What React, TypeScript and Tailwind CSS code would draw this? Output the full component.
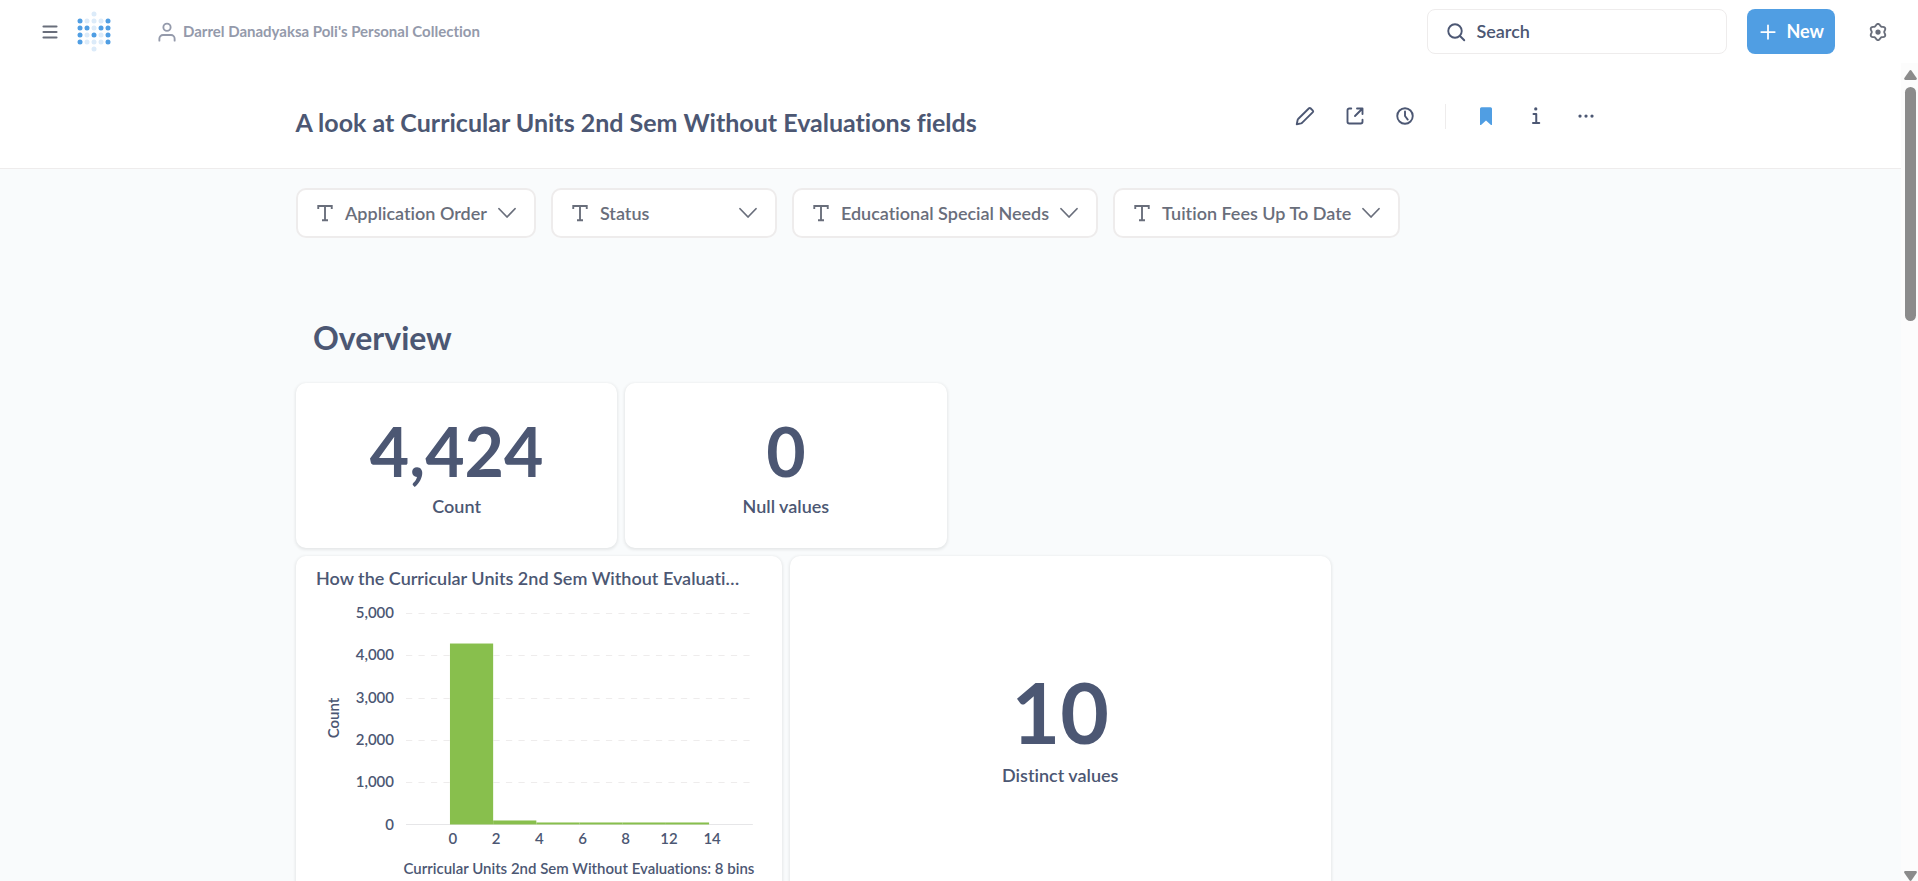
import type { ReactNode } from "react";

type IconProps = { className?: string; children: ReactNode };

function Icon({ className = "size-5", children }: IconProps) {
  return (
    <svg
      viewBox="0 0 16 16"
      fill="none"
      stroke="currentColor"
      strokeWidth="1.5"
      strokeLinecap="round"
      strokeLinejoin="round"
      aria-hidden="true"
      className={`shrink-0 ${className}`}
    >
      {children}
    </svg>
  );
}

const LOGO_ROWS = ["..o..", "#ooo#", "##o##", "#o#o#", "#ooo#", "..o.."];

function Logo() {
  return (
    <svg viewBox="0 0 34 42" aria-hidden="true" className="h-[42px] w-[34px]">
      {LOGO_ROWS.flatMap((row, y) =>
        row.split("").map((dot, x) =>
          dot === "." ? null : (
            <circle
              key={`${x}-${y}`}
              cx={3 + x * 7}
              cy={3 + y * 7}
              r="2.5"
              fill={dot === "#" ? "#509ee3" : "#dcebf9"}
            />
          ),
        ),
      )}
    </svg>
  );
}

// Six-lobed outline, with lobes at the top and the bottom.
const GEAR_POINTS = Array.from({ length: 72 }, (_, i) => {
  const angle = (i / 72) * 2 * Math.PI;
  const radius = 5.75 + 0.75 * Math.cos(6 * angle);
  return `${(8 + radius * Math.sin(angle)).toFixed(2)},${(8 - radius * Math.cos(angle)).toFixed(2)}`;
}).join(" ");

function TopBar() {
  return (
    <header className="flex h-[63px] shrink-0 items-center bg-white pr-[30px] pl-10">
      <button type="button" aria-label="Toggle sidebar" className="text-[#696e7b]">
        <Icon>
          <path d="M2.8 3.6h10.4M2.8 8h10.4M2.8 12.4h10.4" strokeWidth="1.7" />
        </Icon>
      </button>
      <a href="#home" aria-label="Home" className="ml-[17px]">
        <Logo />
      </a>
      <a
        href="#collection"
        className="ml-[46px] flex items-center gap-[6px] text-[15px] font-bold text-[#949aab]"
      >
        <Icon>
          <circle cx="8" cy="4.2" r="2.9" />
          <path d="M1.9 14.9v-1.6a2.9 2.9 0 0 1 2.9-2.9h6.4a2.9 2.9 0 0 1 2.9 2.9v1.6" />
        </Icon>
        Darrel Danadyaksa Poli's Personal Collection
      </a>
      <label className="ml-auto flex h-[45px] w-[300px] items-center gap-[10px] rounded-[8px] border border-[#eeecec] px-[18px] text-[#4c5773]">
        <Icon>
          <circle cx="7.2" cy="7.2" r="5.4" />
          <path d="m11.2 11.2 3.4 3.4" />
        </Icon>
        <input
          type="search"
          aria-label="Search"
          placeholder="Search"
          className="min-w-0 flex-1 bg-transparent text-[18px] font-semibold outline-none placeholder:text-[#4c5773]"
        />
      </label>
      <button
        type="button"
        className="ml-5 flex h-[45px] items-center gap-2 rounded-[8px] bg-[#509ee3] px-[11px] text-[18px] font-bold text-white"
      >
        <Icon>
          <path d="M8 2.6v10.8M2.6 8h10.8" strokeWidth="1.4" />
        </Icon>
        New
      </button>
      <button type="button" aria-label="Settings" className="ml-[33px] text-[#696e7b]">
        <Icon>
          <polygon points={GEAR_POINTS} />
          <circle cx="8" cy="8" r="2.1" fill="currentColor" stroke="none" />
        </Icon>
      </button>
    </header>
  );
}

function ActionButton({ label, children }: { label: string; children: ReactNode }) {
  return (
    <button type="button" aria-label={label} className="flex size-10 items-center justify-center">
      <Icon>{children}</Icon>
    </button>
  );
}

function TitleBar() {
  return (
    <div className="border-b border-[#eeecec] bg-white">
      <div className="mx-auto flex h-[105px] max-w-[1310px] items-start justify-between text-[#4c5773]">
        <h1 className="pt-11 text-[25px] leading-[30px] font-bold">
          A look at Curricular Units 2nd Sem Without Evaluations fields
        </h1>
        <div className="flex items-center gap-[10px] pt-[33px]">
          <ActionButton label="Edit dashboard">
            <path d="M1.4 14.6l.7-3.4a2 2 0 0 1 .6-1L11.2 1.8a.9.9 0 0 1 1.2 0l1.9 1.9a.9.9 0 0 1 0 1.2L5.8 13.3a2 2 0 0 1-1 .6Z" />
          </ActionButton>
          <ActionButton label="Sharing">
            <path d="M5 2H3.4A1.4 1.4 0 0 0 2 3.4v9.2A1.4 1.4 0 0 0 3.4 14h9.2a1.4 1.4 0 0 0 1.4-1.4V11M8 8l5.6-5.6M9.6 2H14v4.4" />
          </ActionButton>
          <ActionButton label="History">
            <circle cx="8" cy="8" r="6.2" />
            <path d="M8 4.4V8l2.2 2.9" />
          </ActionButton>
          <div className="mx-[10px] h-[25px] w-px bg-[#eeecec]" />
          <button
            type="button"
            aria-label="Remove bookmark"
            className="flex size-10 items-center justify-center text-[#509ee3]"
          >
            <Icon>
              <path
                d="M3.2 2.2a1.2 1.2 0 0 1 1.2-1.2h7.2a1.2 1.2 0 0 1 1.2 1.2v12.6c0 .5-.5.6-.8.3L8 11.600l-4 3.500c-.3.3-.8.2-.8-.3Z"
                fill="currentColor"
                stroke="none"
              />
            </Icon>
          </button>
          <ActionButton label="More info">
            <circle cx="7.8" cy="2.3" r="1.3" fill="currentColor" stroke="none" />
            <path d="M6 6.3h2.2v7.2M5.6 13.5h5" strokeWidth="1.6" />
          </ActionButton>
          <ActionButton label="Dashboard menu">
            <g fill="currentColor" stroke="none">
              <circle cx="3.2" cy="8" r="1.3" />
              <circle cx="8" cy="8" r="1.3" />
              <circle cx="12.8" cy="8" r="1.3" />
            </g>
          </ActionButton>
        </div>
      </div>
    </div>
  );
}

const FILTERS = ["Application Order", "Status", "Educational Special Needs", "Tuition Fees Up To Date"];

function Filters() {
  return (
    <div className="flex flex-wrap gap-[15px]">
      {FILTERS.map((name) => (
        <button
          key={name}
          type="button"
          className="flex h-[50px] min-w-[226px] items-center rounded-[10px] border-2 border-[#eeecec] bg-white px-[17px] text-[18px] font-semibold text-[#696e7b]"
        >
          <Icon>
            <path
              d="M2.6 4.8V2.4h10.8v2.4M8 2.4v11.4M5.6 13.8h4.8"
              strokeLinecap="butt"
              strokeLinejoin="miter"
            />
          </Icon>
          <span className="mx-[10px]">{name}</span>
          <Icon className="ml-auto size-5">
            <path d="m1.6 4.6 6.4 6.6 6.4-6.6" strokeWidth="1.4" />
          </Icon>
        </button>
      ))}
    </div>
  );
}

const CARD = "rounded-[10px] bg-white shadow-[0_1px_3px_1px_rgba(0,0,0,0.08)]";

function Scalar({ value, label, large = false }: { value: string; label: string; large?: boolean }) {
  return (
    <div className="flex h-full flex-col items-center justify-center gap-[9px] pt-1">
      <div className={large ? "text-[84px] leading-none font-bold" : "text-[68px] leading-none font-bold"}>
        {value}
      </div>
      <h3 className="text-[18px] leading-6 font-semibold">{label}</h3>
    </div>
  );
}

const Y_TICKS = [
  { label: "5,000", y: 23 },
  { label: "4,000", y: 65 },
  { label: "3,000", y: 108 },
  { label: "2,000", y: 150 },
  { label: "1,000", y: 192 },
];
const X_TICKS = ["0", "2", "4", "6", "8", "12", "14"];
const BAR_HEIGHTS = [181, 4, 2, 2, 2, 2];

function Histogram() {
  return (
    <svg viewBox="0 0 486 290" role="img" aria-label="Histogram" className="block h-[290px] w-full text-[15px] font-semibold">
      <g stroke="#eeecec" strokeDasharray="6.25">
        {Y_TICKS.map((tick) => (
          <line key={tick.label} x1="110" x2="456" y1={tick.y + 0.5} y2={tick.y + 0.5} />
        ))}
      </g>
      <line x1="110" x2="457" y1="234.5" y2="234.5" stroke="#e6e6e8" />
      <g fill="#88bf4d">
        {BAR_HEIGHTS.map((height, i) => (
          <rect key={i} x={154 + i * 43.2} y={234 - height + 0.5} width="43.2" height={height} />
        ))}
      </g>
      <g fill="#4c5773" textAnchor="end">
        {Y_TICKS.map((tick) => (
          <text key={tick.label} x="98" y={tick.y + 5}>{tick.label}</text>
        ))}
        <text x="98" y="240">0</text>
      </g>
      <g fill="#4c5773" textAnchor="middle">
        {X_TICKS.map((label, i) => (
          <text key={label} x={157 + i * 43.2} y="254">{label}</text>
        ))}
        <text x="283" y="284">Curricular Units 2nd Sem Without Evaluations: 8 bins</text>
        <text transform="translate(43 128) rotate(-90)">Count</text>
      </g>
    </svg>
  );
}

function Dashboard() {
  return (
    <main className="mx-auto max-w-[1309px] pt-[19px] text-[#4c5773]">
      <Filters />
      <h2 className="mt-[80px] mb-[25px] px-[17px] text-[32px] leading-10 font-bold">Overview</h2>
      <div className="grid grid-cols-24 gap-2">
        <section className={`col-span-6 h-[165px] ${CARD}`}>
          <Scalar value="4,424" label="Count" />
        </section>
        <section className={`col-span-6 h-[165px] ${CARD}`}>
          <Scalar value="0" label="Null values" />
        </section>
        <section className={`col-span-9 col-start-1 h-[341px] ${CARD}`}>
          <h3 className="px-5 pt-[10px] text-[18px] leading-6 font-semibold">
            How the Curricular Units 2nd Sem Without Evaluati…
          </h3>
          <Histogram />
        </section>
        <section className={`col-span-10 h-[341px] ${CARD}`}>
          <Scalar value="10" label="Distinct values" large />
        </section>
      </div>
    </main>
  );
}

function ScrollTrack() {
  return (
    <div aria-hidden="true" className="flex w-[17px] shrink-0 flex-col items-center justify-between bg-[#fcfcfc] pt-[7px] pl-px">
      <div className="flex flex-col items-center gap-[7px]">
        <svg viewBox="0 0 13 10" className="h-[10px] w-[13px]" fill="#8b8b8b">
          <path d="M5.4.7a1.4 1.4 0 0 1 2.2 0l5 7.3c.6.9.1 2-1 2H1.4c-1.1 0-1.6-1.1-1-2Z" />
        </svg>
        <div className="h-[234px] w-[11px] rounded-full bg-[#8b8b8b]" />
      </div>
      <svg viewBox="0 0 13 10" className="h-[10px] w-[13px]" fill="#8b8b8b">
        <path d="M5.4 9.3a1.4 1.4 0 0 0 2.2 0l5-7.3c.6-.9.1-2-1-2H1.4c-1.1 0-1.6 1.1-1 2Z" />
      </svg>
    </div>
  );
}

export default function App() {
  return (
    <div className="flex h-screen flex-col overflow-hidden bg-[#f9fbfc] font-['Lato',sans-serif] [font-variant-ligatures:none]">
      <TopBar />
      <div className="flex min-h-0 flex-1">
        <div className="min-w-0 flex-1 overflow-hidden">
          <TitleBar />
          <Dashboard />
        </div>
        <ScrollTrack />
      </div>
    </div>
  );
}
